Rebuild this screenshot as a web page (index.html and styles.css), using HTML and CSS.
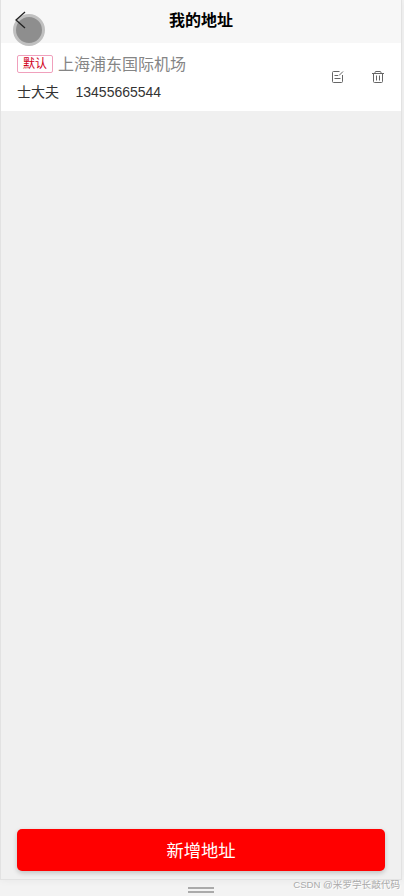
FILE: index.html
```html
<!DOCTYPE html>
<html lang="zh-CN">
<head>
<meta charset="utf-8">
<title>我的地址</title>
<link rel="stylesheet" href="styles.css">
</head>
<body>
<div class="frame">
  <main class="screen">
    <header class="header">
      <svg class="back" viewBox="0 0 11 18"><path d="M10 1 1 9l9 8"/></svg>
      <h1 class="title">我的地址</h1>
      <span class="touch"></span>
    </header>
    <section class="address">
      <div class="info">
        <div class="place-row"><span class="tag">默认</span><span class="place">上海浦东国际机场</span></div>
        <div class="contact"><span class="name">士大夫</span><span class="phone">13455665544</span></div>
      </div>
      <div class="actions">
        <svg class="icon" viewBox="0 0 14 14"><path d="M8.5 1.5h-6a1 1 0 0 0-1 1v9a1 1 0 0 0 1 1h8a1 1 0 0 0 1-1V5M3.5 5.5h3.500M3.500 8.500h6M8 5.500l4-4"/></svg>
        <svg class="icon" viewBox="0 0 14 14"><path d="M1 3.500h12M4 3.200V2.500a1 1 0 0 1 1-1h4a1 1 0 0 1 1 1v.7M2.500 4v7.500a1 1 0 0 0 1 1h7a1 1 0 0 0 1-1V4M5.500 5.500v5M8.500 5.500v5"/></svg>
      </div>
    </section>
    <footer class="footer"><button class="add">新增地址</button></footer>
  </main>
  <div class="bottom"><span class="grip"></span></div>
  <span class="watermark">CSDN @米罗学长敲代码</span>
</div>
</body>
</html>
```
FILE: styles.css
```css
* { box-sizing: border-box; }
body { margin: 0; font-family: "Liberation Sans", "Noto Sans CJK SC", sans-serif; background: #f3f3f3; }
.frame { position: relative; width: 404px; height: 896px; display: flex; flex-direction: column; overflow: hidden; }
.screen { width: 402px; height: 880px; display: flex; flex-direction: column; background: #f0f0f0; border: 1px solid #e2e2e2; border-top: 0; box-shadow: 0 0 8px rgba(0,0,0,.06); }
.header { position: relative; height: 43px; flex: none; display: flex; align-items: center; justify-content: center; background: #f7f7f7; }
.title { margin: 0; font-size: 16px; line-height: 24px; font-weight: 700; color: #000; padding-bottom: 1px; }
.back { position: absolute; z-index: 2; left: 14px; top: 11px; width: 11px; height: 18px; fill: none; stroke: #222; stroke-width: 1.3; }
.touch { position: absolute; left: 12px; top: 14px; width: 32px; height: 32px; border-radius: 50%; background: #8e8e8e; border: 3px solid #c0c0c0; }
.address { height: 68px; flex: none; display: flex; align-items: center; justify-content: space-between; padding: 0 16px; background: #fff; }
.info { padding-top: 3px; }
.place-row { display: flex; align-items: center; height: 26px; }
.tag { width: 36px; height: 18px; border: 1px solid #f0a0bc; border-radius: 2px; font-size: 12px; line-height: 16px; text-align: center; color: #d0021b; }
.place { margin-left: 5px; padding-top: 2px; font-size: 16px; line-height: 24px; color: #858585; }
.contact { height: 29px; display: flex; align-items: center; gap: 16.500px; font-size: 14px; color: #333; }
.name { padding-bottom: 2px; }
.phone { padding-top: 1px; }
.actions { display: flex; gap: 26px; }
.icon { width: 14px; height: 14px; fill: none; stroke: #666; stroke-width: 1; }
.footer { margin-top: auto; padding: 0 16px 8px; display: flex; }
.add { flex: 1; height: 42px; padding: 0 0 2px; border: 0; border-radius: 5px; background: #f00; box-shadow: 0 2px 5px rgba(0,0,0,.2); color: #fff; font: 17.3px "Liberation Sans", "Noto Sans CJK SC", sans-serif; }
.bottom { flex: 1; width: 402px; display: flex; justify-content: center; align-items: flex-start; padding-top: 7px; }
.grip { width: 26px; height: 6px; border-top: 2px solid #aaa; border-bottom: 2px solid #aaa; }
.watermark { position: absolute; right: 4px; top: 877px; font-size: 9.6px; line-height: 16px; white-space: nowrap; color: #aaa; text-shadow: 1px 1px 0 #fff; }
```
